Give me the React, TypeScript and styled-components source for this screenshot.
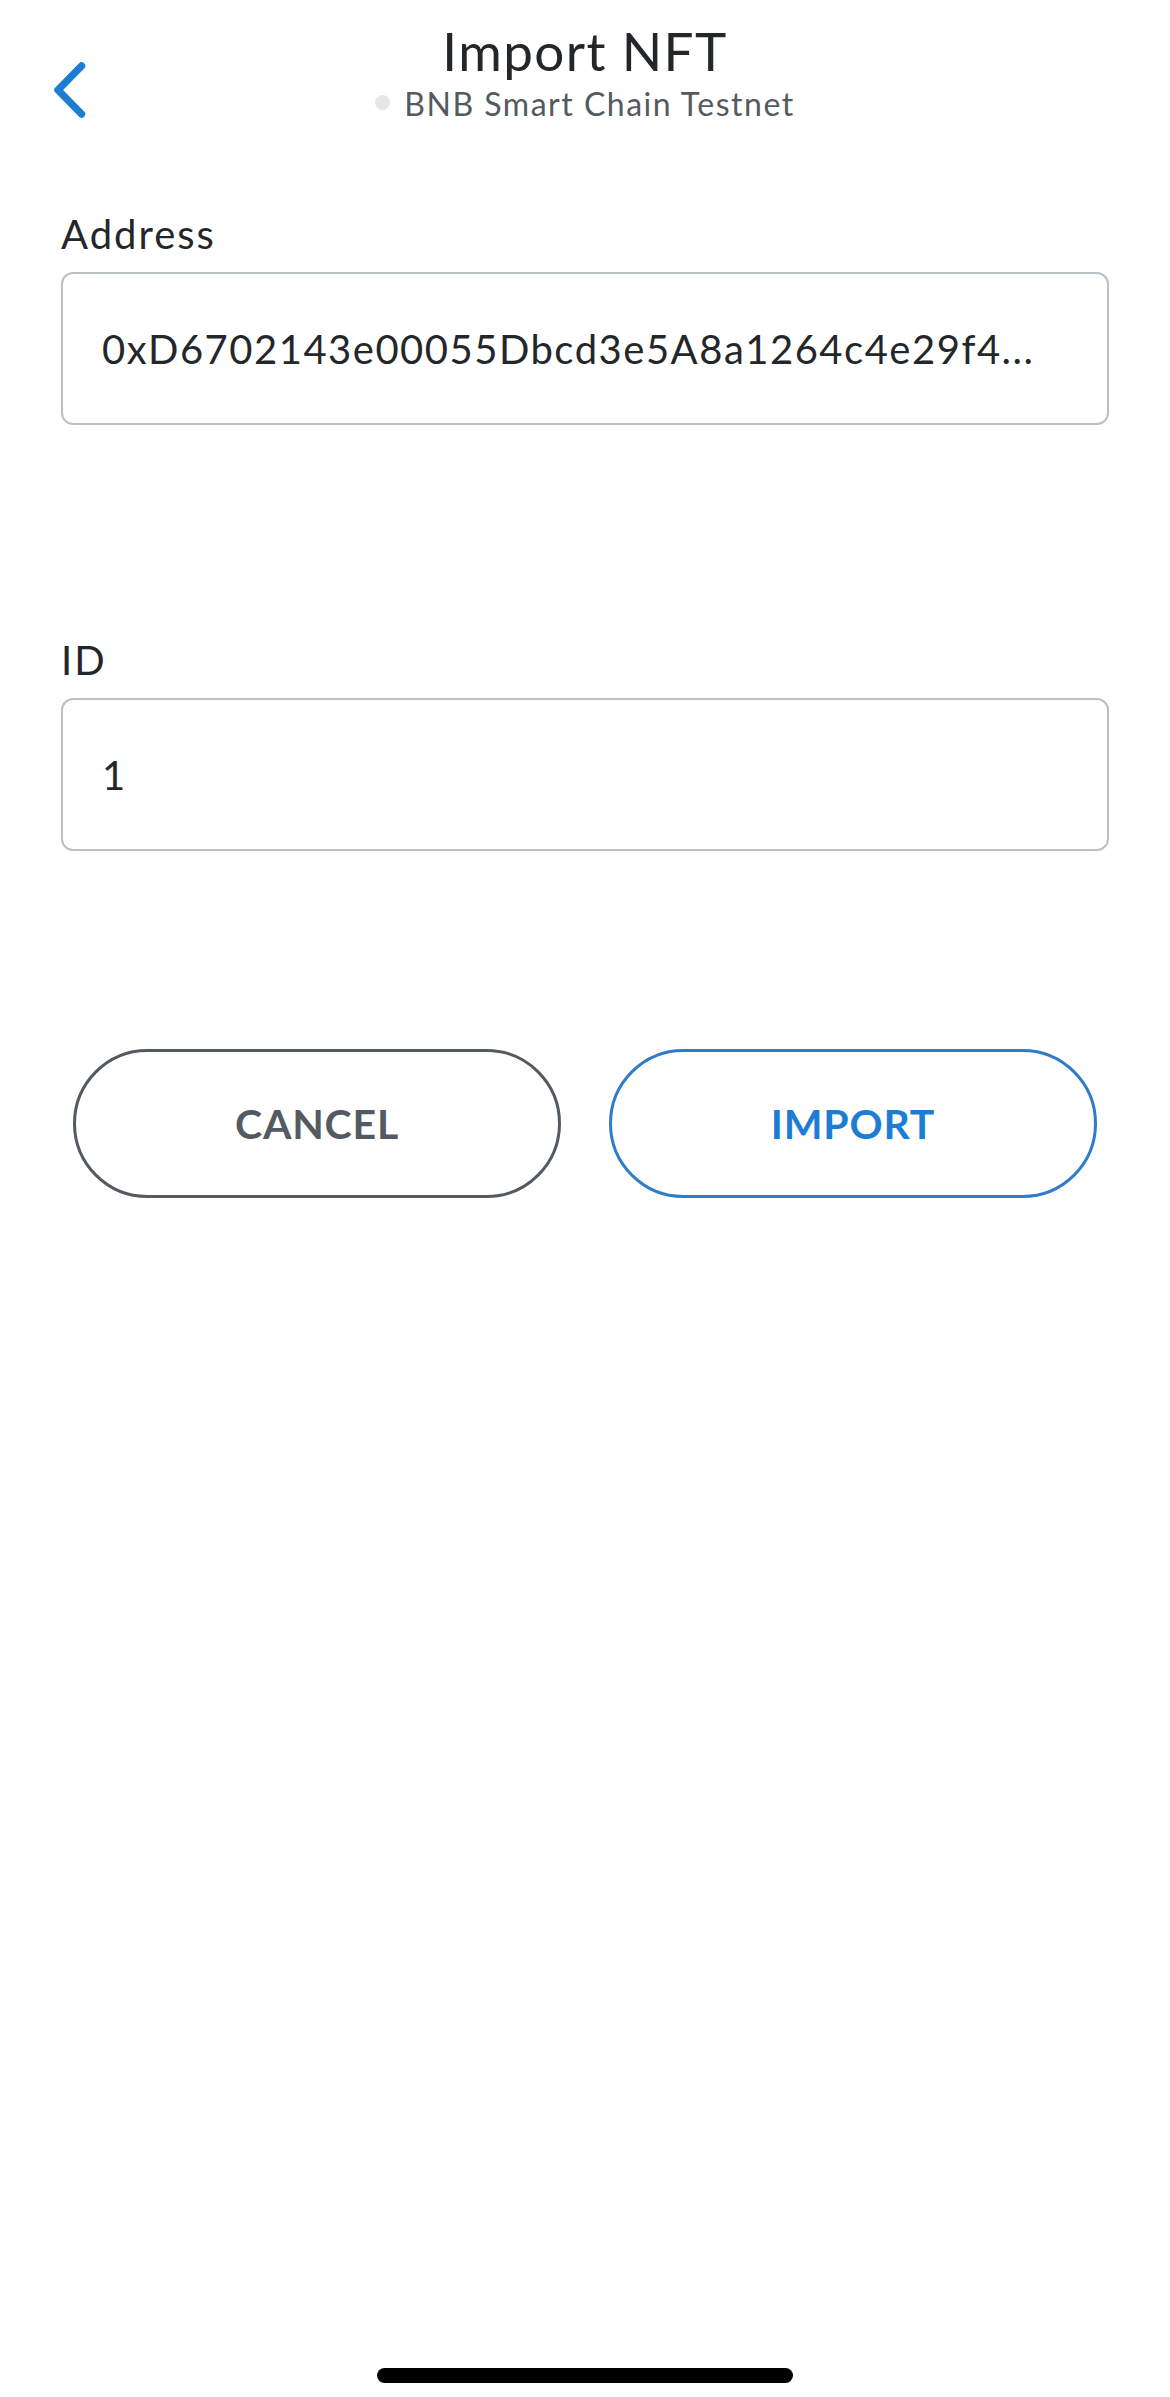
import React from "react";
import styled, { createGlobalStyle } from "styled-components";

const GlobalStyle = createGlobalStyle`
  html, body {
    margin: 0;
    padding: 0;
    background: #ffffff;
  }
  body {
    font-family: Lato, "Noto Sans", "Liberation Sans", sans-serif;
    color: #24272a;
    -webkit-font-smoothing: antialiased;
  }
  * { box-sizing: border-box; }
`;

const Page = styled.div`
  width: 1170px;
  min-height: 2397px;
  display: flex;
  flex-direction: column;
  background: #ffffff;
`;

const Header = styled.header`
  display: grid;
  grid-template-columns: 1fr auto 1fr;
  padding-top: 18px;
  height: 122px;
`;

const BackButton = styled.button`
  justify-self: start;
  align-self: start;
  margin: 44px 0 0 54px;
  padding: 0;
  border: none;
  background: transparent;
  display: flex;
  cursor: pointer;
`;

const TitleBlock = styled.div`
  display: flex;
  flex-direction: column;
  align-items: center;
`;

const Title = styled.h1`
  margin: 0;
  font-size: 53px;
  line-height: 66px;
  font-weight: 400;
  letter-spacing: 1.4px;
  color: #24272a;
`;

const NetworkRow = styled.div`
  display: flex;
  align-items: center;
  gap: 14px;
  height: 40px;
`;

const NetworkDot = styled.span`
  width: 15px;
  height: 15px;
  border-radius: 50%;
  background: #e6e7ea;
  margin-top: -3px;
`;

const NetworkName = styled.span`
  font-size: 32px;
  line-height: 40px;
  color: #535a61;
  letter-spacing: 1.5px;
`;

const Form = styled.main`
  display: flex;
  flex-direction: column;
  padding: 0 61px;
  margin-top: 88px;
`;

const FieldGroup = styled.div<{ $spaceBefore?: number }>`
  display: flex;
  flex-direction: column;
  gap: 14px;
  margin-top: ${(p) => p.$spaceBefore ?? 0}px;
`;

const Label = styled.label`
  font-size: 40px;
  line-height: 48px;
  color: #24272a;
  letter-spacing: 2px;
`;

const Field = styled.div`
  height: 153px;
  border: 2.5px solid #bbc0c5;
  border-radius: 12px;
  padding: 0 39px;
  display: flex;
  align-items: center;
  font-size: 40px;
  letter-spacing: 1.5px;
  color: #24272a;
  white-space: nowrap;
  overflow: hidden;
`;

const Actions = styled.div`
  display: flex;
  gap: 48px;
  padding: 0 73px;
  margin-top: 198px;
`;

const ActionButton = styled.button<{ $primary?: boolean }>`
  flex: 1;
  height: 149px;
  border-radius: 75px;
  background: #ffffff;
  border: 3px solid ${(p) => (p.$primary ? "#2f7cc8" : "#535a61")};
  color: ${(p) => (p.$primary ? "#1b7dd3" : "#535a61")};
  font-family: Lato, "Noto Sans", "Liberation Sans", sans-serif;
  font-size: 41px;
  font-weight: 700;
  letter-spacing: 0.8px;
  cursor: pointer;
  padding: 0;
`;

const HomeIndicator = styled.div`
  margin: auto auto 14px;
  width: 416px;
  height: 15px;
  border-radius: 8px;
  background: #000000;
`;

export default function App() {
  return (
    <>
      <GlobalStyle />
      <Page>
        <Header>
          <BackButton aria-label="Back">
            <svg width="32" height="56" viewBox="0 0 32 56" fill="none">
              <polyline
                points="27.5,4 4,28 27.5,52"
                stroke="#1b7dd3"
                strokeWidth="7.5"
                strokeLinecap="round"
                strokeLinejoin="round"
              />
            </svg>
          </BackButton>
          <TitleBlock>
            <Title>Import NFT</Title>
            <NetworkRow>
              <NetworkDot />
              <NetworkName>BNB Smart Chain Testnet</NetworkName>
            </NetworkRow>
          </TitleBlock>
          <div />
        </Header>
        <Form>
          <FieldGroup>
            <Label>Address</Label>
            <Field>0xD6702143e00055Dbcd3e5A8a1264c4e29f4...</Field>
          </FieldGroup>
          <FieldGroup $spaceBefore={211}>
            <Label>ID</Label>
            <Field>1</Field>
          </FieldGroup>
        </Form>
        <Actions>
          <ActionButton>CANCEL</ActionButton>
          <ActionButton $primary>IMPORT</ActionButton>
        </Actions>
        <HomeIndicator />
      </Page>
    </>
  );
}
